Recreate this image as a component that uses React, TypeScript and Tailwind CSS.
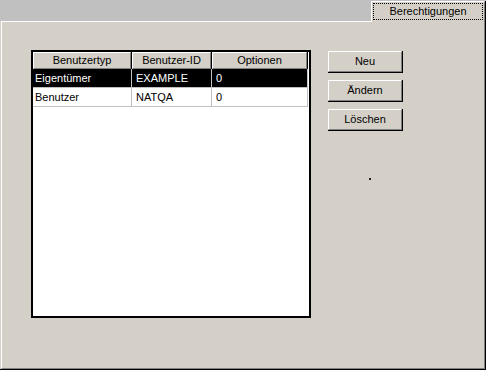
const rows = [
  { typ: "Eigentümer", id: "EXAMPLE", opt: "0", selected: true },
  { typ: "Benutzer", id: "NATQA", opt: "0", selected: false },
]

function Button({ label }: { label: string }) {
  return (
    <div className="w-[75px] h-[22px] border-r border-b border-black">
      <div className="h-full border-t border-l border-white border-r border-b border-r-[#808080] border-b-[#808080] bg-[#d4d0c8] flex items-center justify-center text-black">
        {label}
      </div>
    </div>
  )
}

function HeaderCell({ label, w }: { label: string; w: string }) {
  return (
    <div className={`${w} h-[17px] shrink-0 border-r border-black`}>
      <div className="h-full border-t border-l border-white border-r border-b border-r-[#808080] border-b-[#808080] flex items-center justify-center leading-none">
        {label}
      </div>
    </div>
  )
}

export default function App() {
  return (
    <div
      className="w-[486px] h-[370px] bg-[#c0c0c0] flex flex-col text-[11px] text-black overflow-hidden"
      style={{ fontFamily: '"Liberation Sans", Arial, sans-serif' }}
    >
      {/* Tab strip */}
      <div className="h-[21px] pt-[1px] flex justify-end shrink-0">
        <div className="relative z-10 w-[115px] h-[21px] border-r border-black bg-[#d4d0c8]">
          <div className="h-full border-t border-l border-white border-r border-r-[#808080] px-[1px] pt-[1px]">
            <div className="h-[17px] border border-dotted border-black flex items-center justify-center">
              Berechtigungen
            </div>
          </div>
        </div>
      </div>

      {/* Panel */}
      <div className="flex-1 flex bg-[#d4d0c8] pl-[1px] border-r border-b border-black">
        <div className="flex-1 border-t border-l border-white border-r border-b border-r-[#808080] border-b-[#808080] pl-[29px] pt-[28px] flex gap-[17px]">
          {/* List */}
          <div className="w-[280px] h-[268px] border-2 border-black bg-white flex flex-col">
            <div className="flex bg-[#d4d0c8]">
              <HeaderCell label="Benutzertyp" w="w-[99px]" />
              <HeaderCell label="Benutzer-ID" w="w-[80px]" />
              <HeaderCell label="Optionen" w="w-[96px]" />
              <div className="flex-1 h-[17px] border-t border-l border-white" />
            </div>
            {rows.map((r) => (
              <div
                key={r.id}
                className={`flex h-[19px] w-[275px] ${r.selected ? "bg-black text-white" : "bg-white text-black"}`}
              >
                <div className="w-[99px] shrink-0 border-r border-b border-[#c0c0c0] pl-[2px] flex items-center">
                  {r.typ}
                </div>
                <div className="w-[80px] shrink-0 border-r border-b border-[#c0c0c0] pl-[4px] flex items-center">
                  {r.id}
                </div>
                <div className="w-[96px] shrink-0 border-r border-b border-[#c0c0c0] pl-[4px] flex items-center">
                  {r.opt}
                </div>
              </div>
            ))}
          </div>

          {/* Buttons */}
          <div className="flex flex-col gap-[7px] pt-[1px]">
            <Button label="Neu" />
            <Button label="Ändern" />
            <Button label="Löschen" />
            <div className="w-[2px] h-[2px] bg-[#202020] ml-[41px] mt-[40px]" />
          </div>
        </div>
      </div>
    </div>
  )
}
